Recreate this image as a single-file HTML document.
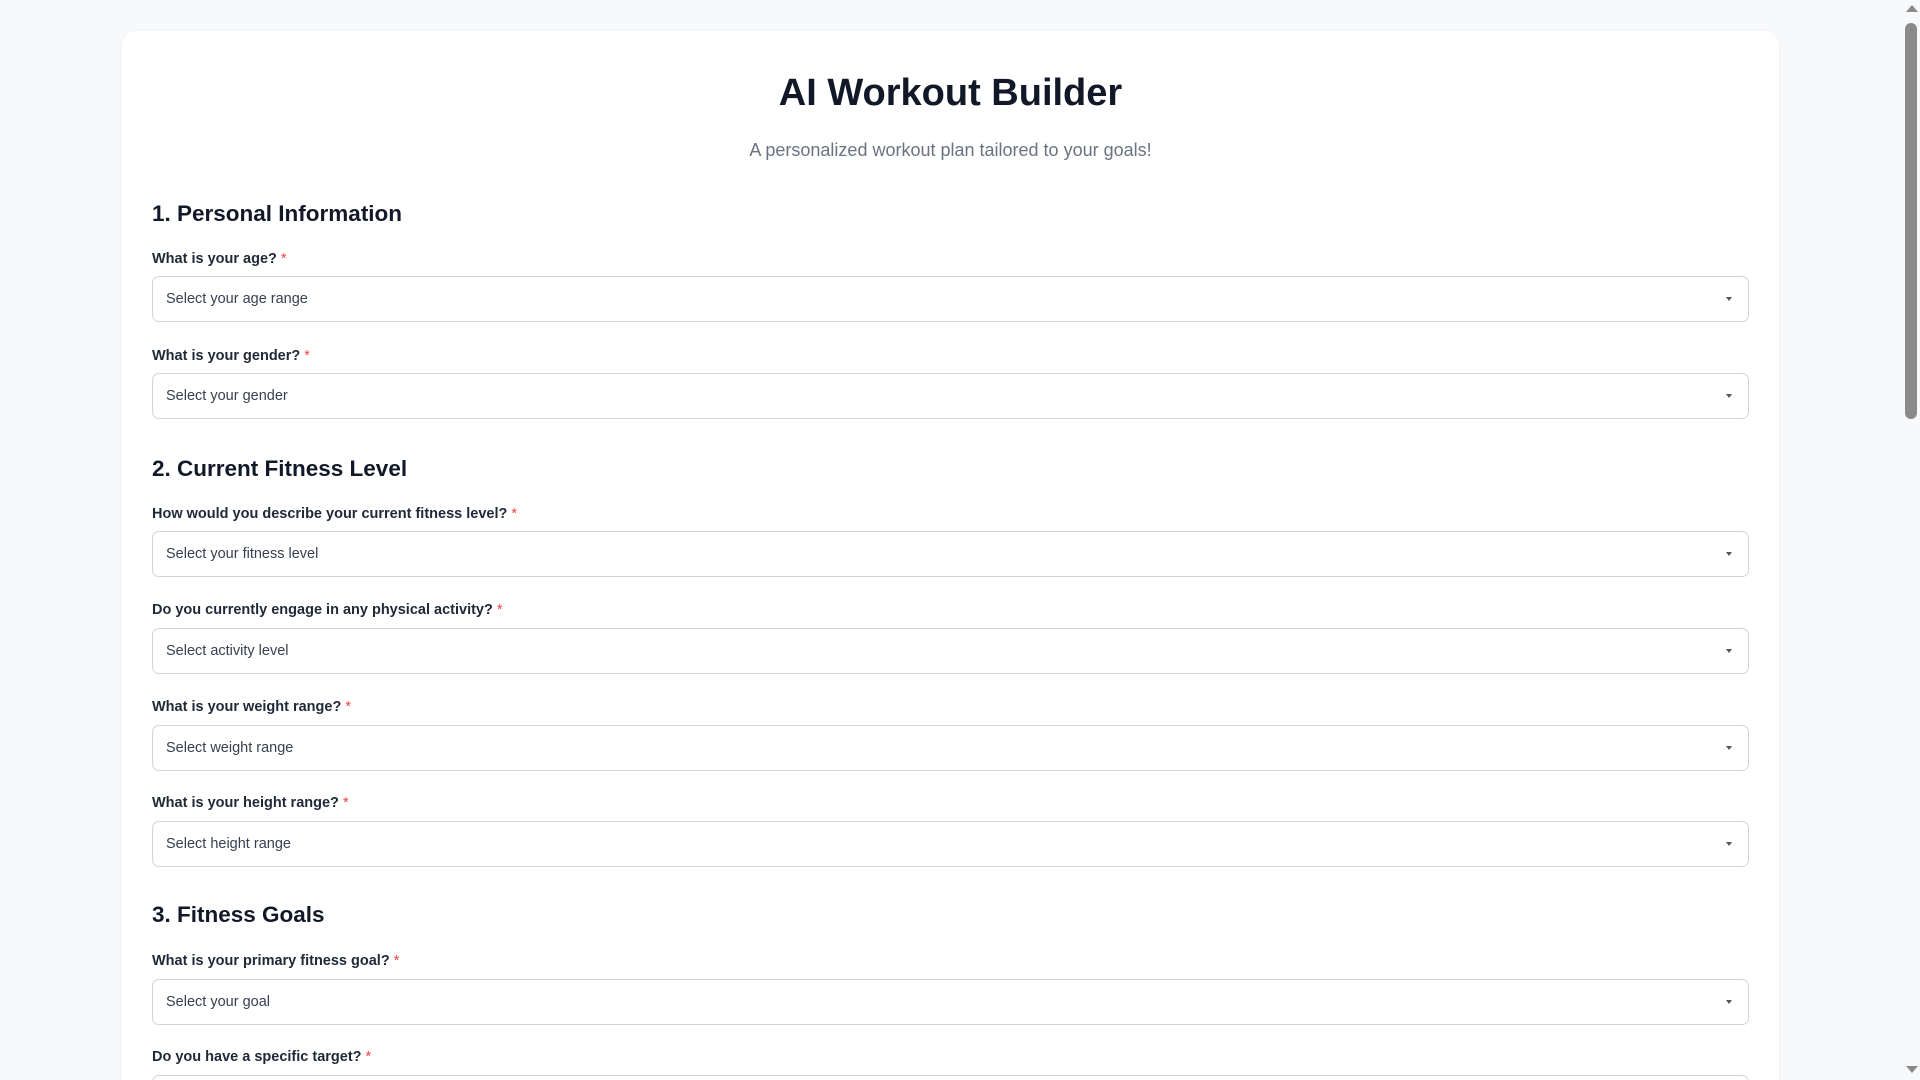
<!DOCTYPE html>
<html><head><meta charset="utf-8"><style>
*{box-sizing:border-box;margin:0;padding:0}
html,body{width:1920px;height:1080px;overflow:hidden;background:#f8f9fb;font-family:"Liberation Sans",sans-serif;color:#111827}
.card{position:absolute;left:122px;top:31px;width:1657px;height:1049px;overflow:hidden;background:#fff;border-radius:14px 14px 0 0;box-shadow:0 1px 4px rgba(0,0,0,.06)}
.a{position:absolute;white-space:nowrap}
h1{position:absolute;left:0;width:1657px;text-align:center;top:41px;font-size:38px;font-weight:bold;color:#111827}
.sub{position:absolute;left:0;width:1657px;text-align:center;top:109px;font-size:18px;color:#6b7280}
h2{position:absolute;left:30px;font-size:22.5px;font-weight:bold;color:#111827}
.lab{position:absolute;left:30px;font-size:14.5px;font-weight:bold;color:#1f2937}
.lab span{color:#ef4444;font-weight:normal}
.in{position:absolute;left:30px;width:1597px;height:46px;border:1px solid #d1d5db;border-radius:7px;font-size:14.5px;color:#374151;padding:14px 0 0 13px}
.in:after{content:"";position:absolute;right:16px;top:20px;border-left:3.5px solid transparent;border-right:3.5px solid transparent;border-top:4px solid #555}
.sb{position:absolute;left:1904px;top:0;width:16px;height:1080px;background:#f8f9fb}
.th{position:absolute;left:1905px;top:23px;width:12px;height:396px;background:#8a8a8a;border-radius:6px}
</style></head><body>
<div class="card">
<h1>AI Workout Builder</h1>
<div class="sub">A personalized workout plan tailored to your goals!</div>
<h2 style="top:170px">1. Personal Information</h2>
<div class="lab" style="top:220px">What is your age? <span>*</span></div>
<div class="in" style="top:245px">Select your age range</div>
<div class="lab" style="top:317px">What is your gender? <span>*</span></div>
<div class="in" style="top:342px">Select your gender</div>
<h2 style="top:425px">2. Current Fitness Level</h2>
<div class="lab" style="top:475px">How would you describe your current fitness level? <span>*</span></div>
<div class="in" style="top:500px">Select your fitness level</div>
<div class="lab" style="top:571px">Do you currently engage in any physical activity? <span>*</span></div>
<div class="in" style="top:597px">Select activity level</div>
<div class="lab" style="top:668px">What is your weight range? <span>*</span></div>
<div class="in" style="top:694px">Select weight range</div>
<div class="lab" style="top:764px">What is your height range? <span>*</span></div>
<div class="in" style="top:790px">Select height range</div>
<h2 style="top:871px">3. Fitness Goals</h2>
<div class="lab" style="top:922px">What is your primary fitness goal? <span>*</span></div>
<div class="in" style="top:948px">Select your goal</div>
<div class="lab" style="top:1018px">Do you have a specific target? <span>*</span></div>
<div class="in" style="top:1044px"></div>
</div>
<div class="sb"></div><div class="th"></div>
<div class="a" style="left:1906px;top:5px;border-left:6px solid transparent;border-right:6px solid transparent;border-bottom:7px solid #8a8a8a"></div>
<div class="a" style="left:1906px;top:1066px;border-left:6px solid transparent;border-right:6px solid transparent;border-top:7px solid #8a8a8a"></div>
</body></html>
